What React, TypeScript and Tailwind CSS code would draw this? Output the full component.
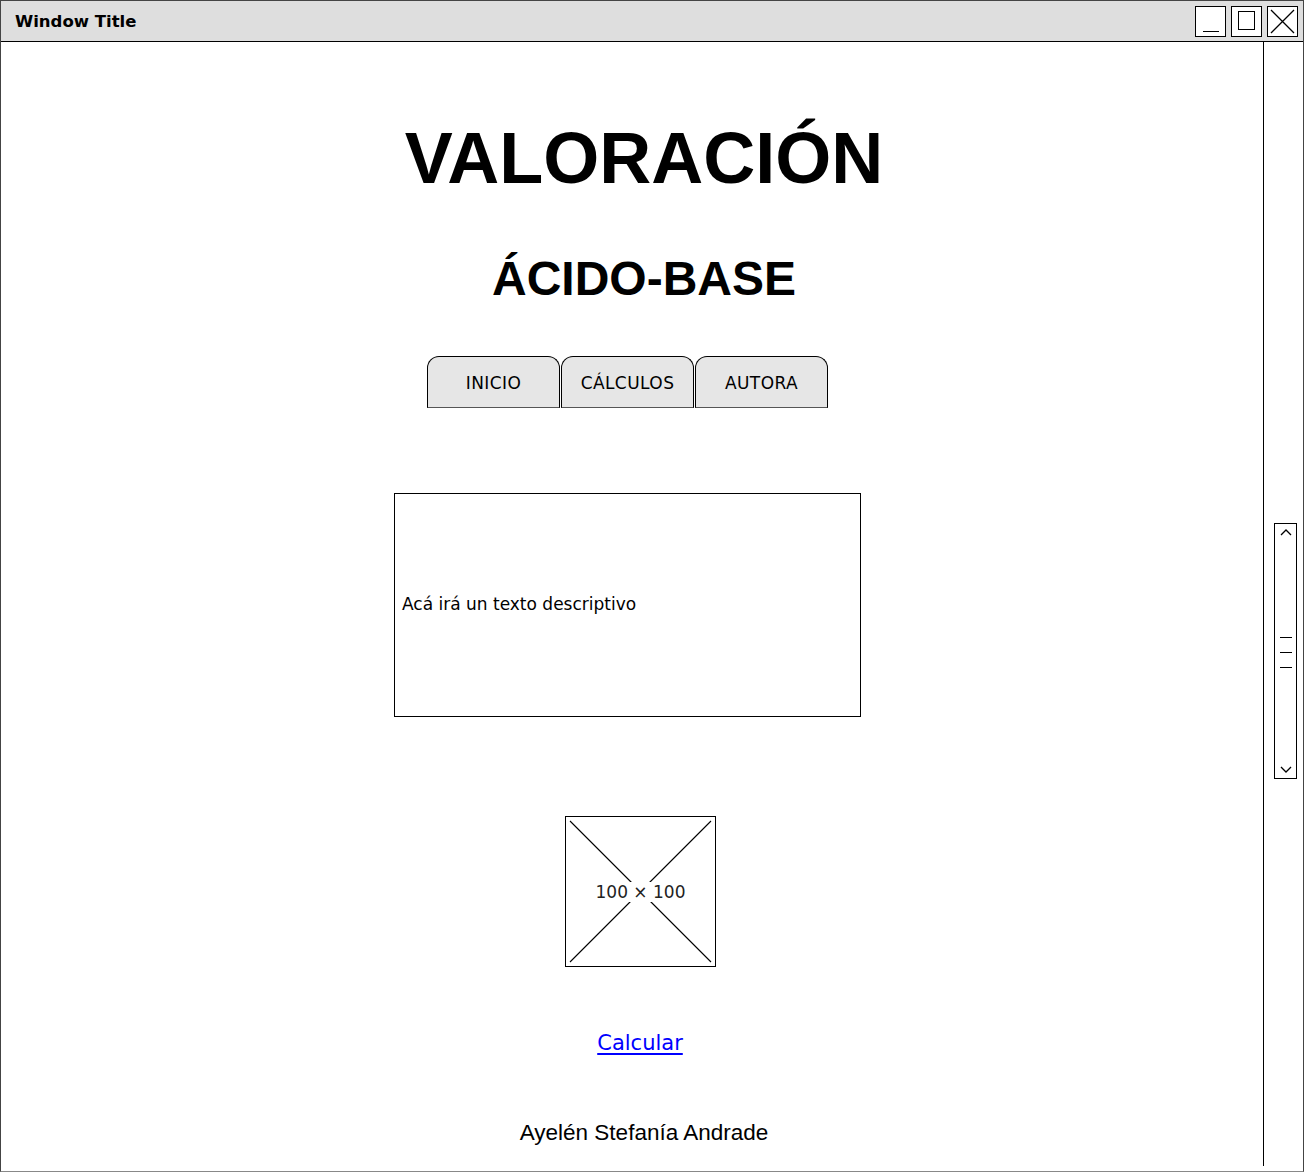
import React from 'react';

const hand = "font-['DejaVu_Sans',sans-serif]";
const arial = "font-['Liberation_Sans',Arial,sans-serif]";

const TitleButton = ({ kind }: { kind: 'min' | 'max' | 'close' }) => (
    <div className="w-[31px] h-[31px] border border-black bg-white flex items-center justify-center">
        {kind === 'min' && <div className="w-[16px] h-[1px] bg-black mt-[19px]" />}
        {kind === 'max' && <div className="w-[17px] h-[19px] border border-black mb-[3px]" />}
        {kind === 'close' && (
            <svg width="29" height="29" viewBox="0 0 29 29">
                <path d="M3 3 L26 26 M26 3 L3 26" stroke="black" strokeWidth="1.3" />
            </svg>
        )}
    </div>
);

const Tab = ({ label }: { label: string }) => (
    <div className="w-[133px] h-[52px] border border-black border-b-[#555] rounded-t-[12px] bg-[#e6e6e6] flex items-center justify-center pt-[3px] text-[17px] text-black tracking-wide">
        {label}
    </div>
);

const Placeholder = () => (
    <div className="relative w-[151px] h-[151px] border border-black bg-white flex items-center justify-center">
        <svg className="absolute inset-0" width="149" height="149" viewBox="0 0 149 149">
            <path d="M4 4 L145 145 M145 4 L4 145" stroke="black" strokeWidth="1.1" />
        </svg>
        <span className="relative bg-white px-[2px] text-[17px] leading-[20px] text-[#222]">100 × 100</span>
    </div>
);

export default function App() {
    return (
        <div className={`w-[1304px] h-[1172px] bg-white border border-[#444] border-b-[#888] flex flex-col overflow-hidden ${hand}`}>
            {/* Title bar */}
            <div className="h-[41px] shrink-0 bg-[#dedede] border-b border-black flex items-center justify-between pl-[14px] pr-[5px]">
                <span className="text-[16.5px] font-bold text-black mt-[3px]">Window Title</span>
                <div className="flex gap-[5px] mt-[1px]">
                    <TitleButton kind="min" />
                    <TitleButton kind="max" />
                    <TitleButton kind="close" />
                </div>
            </div>

            <div className="flex flex-1 min-h-0">
                {/* Content */}
                <div className="w-[1262px] shrink-0 flex flex-col pt-[80px]">
                    <h1 className={`${arial} pl-6 text-center text-[72px] leading-none font-bold text-black`}>
                        VALORACIÓN
                    </h1>
                    <h2 className={`${arial} pl-6 mt-[61px] text-center text-[48px] leading-none font-bold text-black`}>
                        ÁCIDO-BASE
                    </h2>

                    <div className="mt-[53px] ml-[426px] flex gap-[1px]">
                        <Tab label="INICIO" />
                        <Tab label="CÁLCULOS" />
                        <Tab label="AUTORA" />
                    </div>

                    <div className="mt-[85px] ml-[393px] w-[467px] h-[224px] border border-black flex items-center px-[7px]">
                        <span className="text-[17px] text-black">Acá irá un texto descriptivo</span>
                    </div>

                    <div className="mt-[99px] ml-[564px]">
                        <Placeholder />
                    </div>

                    <div className="mt-[61px] pl-4 text-center leading-[30px]">
                        <a href="#" className="text-[21px] text-[#0000ff] underline underline-offset-[3px]">
                            Calcular
                        </a>
                    </div>

                    <div className={`${arial} mt-[58px] pl-6 text-center text-[22.5px] leading-[30px] text-black`}>
                        Ayelén Stefanía Andrade
                    </div>
                </div>

                {/* Vertical scrollbar strip */}
                <div className="flex-1 border-l border-black mb-[5px] pt-[481px] pl-[10px]">
                    <div className="w-[23px] h-[256px] border border-black flex flex-col items-center justify-between py-[3px]">
                        <svg width="14" height="10" viewBox="0 0 14 10">
                            <path d="M2 8 L7 3 L12 8" stroke="black" strokeWidth="1.3" fill="none" />
                        </svg>
                        <div className="flex flex-col gap-[14px] mt-[2px]">
                            <div className="w-[12px] h-[1px] bg-black" />
                            <div className="w-[12px] h-[1px] bg-black" />
                            <div className="w-[12px] h-[1px] bg-black" />
                        </div>
                        <svg width="14" height="10" viewBox="0 0 14 10">
                            <path d="M2 2 L7 7 L12 2" stroke="black" strokeWidth="1.3" fill="none" />
                        </svg>
                    </div>
                </div>
            </div>
        </div>
    );
}
